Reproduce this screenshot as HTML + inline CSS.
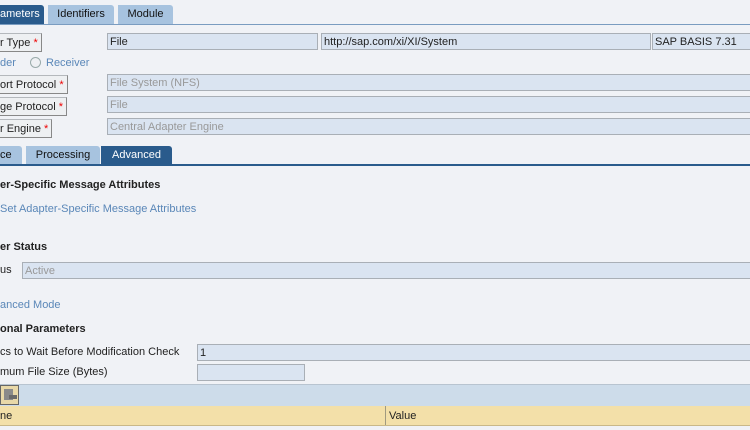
<!DOCTYPE html>
<html><head><style>
body{margin:0;width:750px;height:430px;background:#f0f2f6;font-family:"Liberation Sans",Arial,sans-serif;font-size:11px;color:#222;position:relative;overflow:hidden}
.a{position:absolute;white-space:nowrap}
.tab{position:absolute;height:19px;line-height:19px;background:#a7c3df;color:#111;border-top-right-radius:3px;box-sizing:border-box;text-align:center;white-space:nowrap}
.tab.on{background:#2a5b8c;color:#fff}
.line{position:absolute;left:0;width:750px;height:2px;background:#2a5b8c}
.fld{position:absolute;line-height:17px;background:#dae4f1;border:1px solid #a9afb6;padding-left:2px;box-sizing:border-box;height:17px;white-space:nowrap}
.dis{color:#999}
.btn{position:absolute;height:19px;line-height:18px;background:#eef0f2;border:1px solid #b4b8bc;border-left:none;border-bottom-color:#888;border-right-color:#888;padding:0 3px 0 0;box-sizing:border-box;white-space:nowrap}
.req{color:#e00}
.b{font-weight:bold}
.lnk{color:#5a87b8}
</style></head><body>
<div class="tab on" style="left:0;top:5px;width:44px;text-align:left">ameters</div>
<div class="tab" style="left:48px;top:5px;width:66px">Identifiers</div>
<div class="tab" style="left:118px;top:5px;width:55px">Module</div>
<div class="line" style="top:24px;height:1px;background:#7a9cc0"></div>

<div class="btn" style="left:0;top:33px">r Type <span class="req">*</span></div>
<div class="fld" style="left:107px;top:33px;width:211px">File</div>
<div class="fld" style="left:321px;top:33px;width:330px">http://sap.com/xi/XI/System</div>
<div class="fld" style="left:652px;top:33px;width:100px">SAP BASIS 7.31</div>

<div class="a lnk" style="left:0;top:57px">der</div>
<div class="a" style="left:30px;top:57px;width:9px;height:9px;border:1px solid #9aa;border-radius:50%;background:#eef0f3"></div>
<div class="a lnk" style="left:46px;top:57px">Receiver</div>

<div class="btn" style="left:0;top:75px">ort Protocol <span class="req">*</span></div>
<div class="fld dis" style="left:107px;top:74px;width:650px">File System (NFS)</div>
<div class="btn" style="left:0;top:97px">ge Protocol <span class="req">*</span></div>
<div class="fld dis" style="left:107px;top:96px;width:650px">File</div>
<div class="btn" style="left:0;top:119px">r Engine <span class="req">*</span></div>
<div class="fld dis" style="left:107px;top:118px;width:650px">Central Adapter Engine</div>

<div class="tab" style="left:0;top:146px;width:22px;text-align:left">ce</div>
<div class="tab" style="left:26px;top:146px;width:74px">Processing</div>
<div class="tab on" style="left:101px;top:146px;width:71px">Advanced</div>
<div class="line" style="top:164px"></div>

<div class="a b" style="left:0;top:179px">er-Specific Message Attributes</div>
<div class="a lnk" style="left:0;top:203px">Set Adapter-Specific Message Attributes</div>
<div class="a b" style="left:0;top:241px">er Status</div>
<div class="a" style="left:0;top:264px">us</div>
<div class="fld dis" style="left:22px;top:262px;width:735px">Active</div>
<div class="a lnk" style="left:0;top:299px">anced Mode</div>
<div class="a b" style="left:0;top:323px">onal Parameters</div>
<div class="a" style="left:0;top:346px">cs to Wait Before Modification Check</div>
<div class="fld" style="left:197px;top:344px;width:560px">1</div>
<div class="a" style="left:0;top:366px">mum File Size (Bytes)</div>
<div class="fld" style="left:197px;top:364px;width:108px"></div>

<div class="a" style="left:0;top:384px;width:750px;height:21px;background:#cddcea;border-top:1px solid #b8c4d0;border-bottom:1px solid #8aa4c0"></div>
<div class="a" style="left:0;top:385px;width:19px;height:20px;background:#e8d8a8;border:1px solid #666;box-sizing:border-box"><div class="a" style="left:3px;top:3px;width:9px;height:11px;background:#8a8a8a"></div><div class="a" style="left:8px;top:9px;width:8px;height:4px;background:#6a6a6a"></div></div>
<div class="a" style="left:0;top:406px;width:750px;height:19px;background:#f3e0a9;border-bottom:1px solid #c9b888"></div>
<div class="a" style="left:385px;top:406px;width:1px;height:19px;background:#a09a80"></div>
<div class="a" style="left:0;top:410px">ne</div>
<div class="a" style="left:389px;top:410px">Value</div>
</body></html>
